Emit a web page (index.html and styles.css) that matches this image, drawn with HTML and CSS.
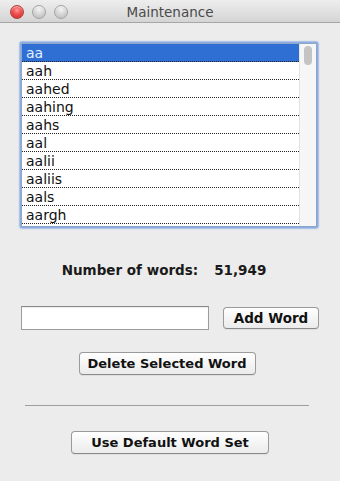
FILE: index.html
```html
<!DOCTYPE html>
<html>
<head>
<meta charset="utf-8">
<link rel="stylesheet" href="styles.css">
</head>
<body>
<div class="window">
  <div class="titlebar">
    <div class="lights">
      <span class="light close"></span>
      <span class="light"></span>
      <span class="light"></span>
    </div>
    <div class="title">Maintenance</div>
  </div>
  <div class="content">
    <div class="list">
      <div class="rows">
        <div class="row selected">aa</div>
        <div class="row">aah</div>
        <div class="row">aahed</div>
        <div class="row">aahing</div>
        <div class="row">aahs</div>
        <div class="row">aal</div>
        <div class="row">aalii</div>
        <div class="row">aaliis</div>
        <div class="row">aals</div>
        <div class="row">aargh</div>
      </div>
      <div class="scrollbar"><div class="thumb"></div></div>
    </div>
    <div class="count"><span>Number of words:</span><span>51,949</span></div>
    <div class="add-row">
      <input class="field" type="text">
      <button class="btn btn-add">Add Word</button>
    </div>
    <button class="btn btn-delete">Delete Selected Word</button>
    <div class="separator"></div>
    <button class="btn btn-default">Use Default Word Set</button>
  </div>
</div>
</body>
</html>
```
FILE: styles.css
```css
html, body {
  margin: 0;
  padding: 0;
  background: #ececec;
}
.window {
  width: 340px;
  height: 481px;
  font-family: "DejaVu Sans", "Liberation Sans", sans-serif;
  color: #111;
  background: #ececec;
}
.titlebar {
  height: 22px;
  border-bottom: 1px solid #a6a6a6;
  background: linear-gradient(#eeeeee, #d4d4d4);
  display: flex;
  align-items: center;
  position: relative;
}
.lights {
  display: flex;
  gap: 8px;
  padding-left: 10px;
  padding-top: 2px;
}
.light {
  width: 12px;
  height: 12px;
  border-radius: 50%;
  border: 0.5px solid #a3a3a3;
  background: radial-gradient(circle at 50% 30%, #f4f4f4 0%, #d7d7d7 45%, #b9b9b9 100%);
  box-shadow: inset 0 1px 1px rgba(255,255,255,0.6);
}
.light.close {
  border-color: #b43c3c;
  background: radial-gradient(circle at 50% 35%, #ff9a9a 0%, #f0524f 40%, #c42626 100%);
}
.title {
  position: absolute;
  left: 0;
  right: 0;
  top: 1px;
  text-align: center;
  font-size: 13.5px;
  line-height: 22px;
  color: #4a4a4a;
  pointer-events: none;
}
.content {
  display: flex;
  flex-direction: column;
  align-items: center;
}
.list {
  margin-top: 20px;
  margin-right: 2px;
  width: 294px;
  height: 182px;
  border: 1px solid #8ea6c8;
  background: #fff;
  display: flex;
  box-shadow: 0 0 0 1.5px rgba(120, 160, 225, 0.75), 0 0 2px 2px rgba(120, 160, 225, 0.35);
  border-radius: 1px;
}
.rows {
  flex: 1;
}
.row {
  height: 17px;
  line-height: 18px;
  border-bottom: 1px dotted #222;
  padding-left: 4px;
  font-size: 14px;
  color: #111;
}
.row.selected {
  background: #2f6fd4;
  color: #e6efff;
}
.scrollbar {
  width: 16px;
  background: #f6f6f6;
  border-left: 1px solid #e4e4e4;
  padding-top: 2px;
  display: flex;
  justify-content: center;
}
.thumb {
  width: 8px;
  height: 19px;
  border-radius: 4px;
  background: #c4c4c4;
}
.count {
  margin-top: 35px;
  margin-right: 12px;
  display: flex;
  gap: 16px;
  font-weight: bold;
  font-size: 13.5px;
  line-height: 16px;
  color: #1a1a1a;
}
.add-row {
  margin-top: 28px;
  width: 298px;
  display: flex;
  align-items: center;
  justify-content: space-between;
}
.field {
  width: 188px;
  height: 24px;
  box-sizing: border-box;
  margin: 0;
  border: 1px solid #9c9c9c;
  border-top-color: #8a8a8a;
  background: #fff;
  box-shadow: inset 0 1px 1px rgba(0,0,0,0.08);
  outline: none;
  padding: 0;
}
.btn {
  box-sizing: border-box;
  height: 23px;
  margin: 0;
  padding: 0;
  font-family: "DejaVu Sans", "Liberation Sans", sans-serif;
  font-weight: bold;
  font-size: 13px;
  color: #111;
  border: 1px solid #9a9a9a;
  border-bottom-color: #8a8a8a;
  border-radius: 4px;
  background: linear-gradient(#ffffff, #f3f3f3 60%, #ebebeb);
  box-shadow: 0 1px 0 rgba(0,0,0,0.06);
}
.btn-add {
  width: 96px;
  height: 22px;
  font-size: 13.5px;
}
.btn-delete {
  margin-top: 22px;
  margin-right: 6px;
  width: 177px;
}
.separator {
  margin-top: 30px;
  margin-right: 6px;
  width: 284px;
  height: 1px;
  background: #9d9d9d;
}
.btn-default {
  margin-top: 25px;
  width: 198px;
}
```
